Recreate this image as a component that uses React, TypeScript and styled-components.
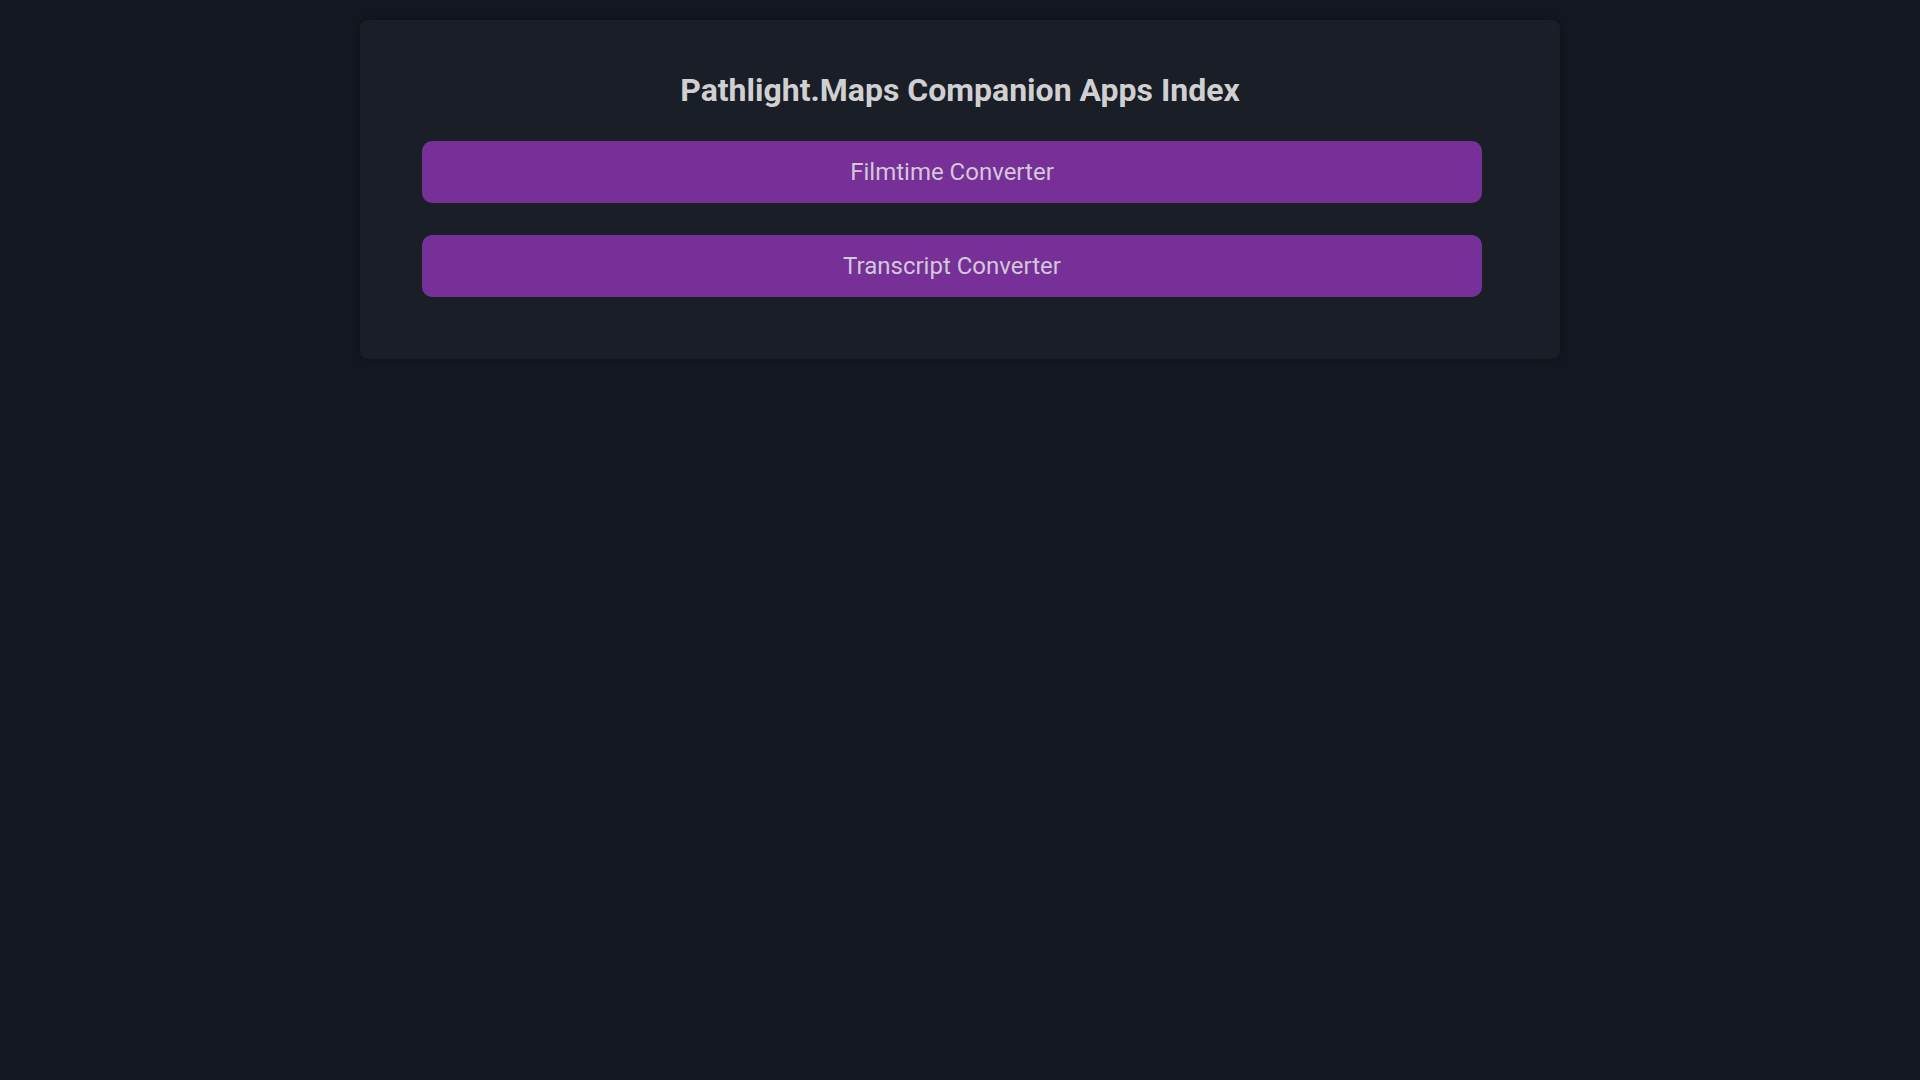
import styled, { createGlobalStyle } from "styled-components";

const APPS = ["Filmtime Converter", "Transcript Converter"];

const GlobalStyle = createGlobalStyle`
  body {
    margin: 0;
    background-color: #13171f;
    font-family: Roboto, "Liberation Sans", sans-serif;
  }
`;

export default function App(): JSX.Element {
  return (
    <>
      <GlobalStyle />
      <Card>
        <Title>Pathlight.Maps Companion Apps Index</Title>
        <AppList>
          {APPS.map((name) => (
            <AppButton key={name}>{name}</AppButton>
          ))}
        </AppList>
      </Card>
    </>
  );
}

const Card = styled.div`
  box-sizing: border-box;
  width: 1200px;
  margin: 20px auto;
  padding: 30px 78px 62px 62px;
  background-color: #1a1e26;
  border-radius: 8px;
  box-shadow: 0 0 10px rgba(0, 0, 0, 0.25);
  display: flex;
  flex-direction: column;
`;

const Title = styled.h1`
  margin: 21px 0 32px 16px;
  font-size: 32px;
  line-height: 38px;
  font-weight: 700;
  color: #d0d0d2;
  text-align: center;
`;

const AppList = styled.div`
  display: flex;
  flex-direction: column;
  gap: 32px;
`;

const AppButton = styled.button`
  height: 62px;
  border: none;
  border-radius: 10px;
  background-color: #763097;
  color: #d3c7da;
  font-family: Roboto, "Liberation Sans", sans-serif;
  font-size: 24px;
  cursor: pointer;
`;
